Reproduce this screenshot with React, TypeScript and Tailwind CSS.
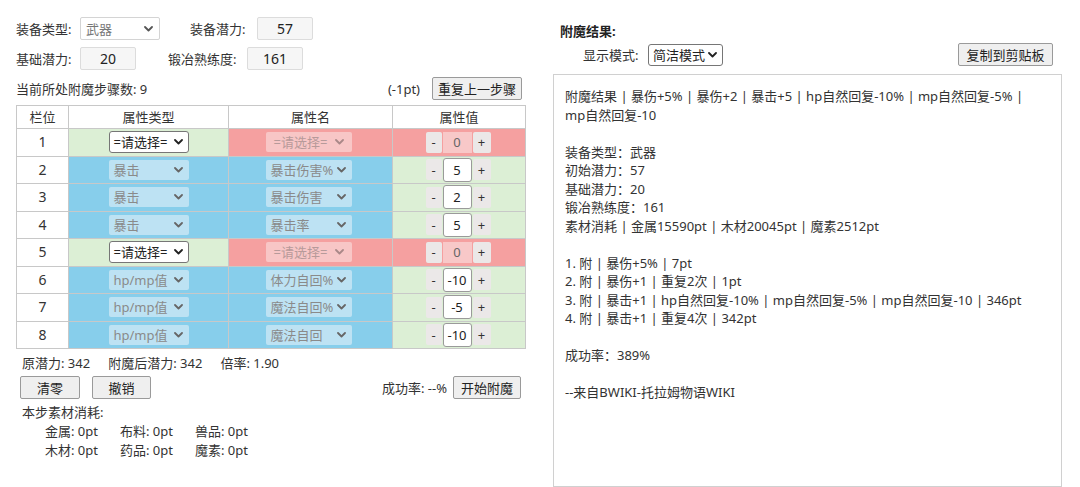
import React from "react";

const FONT = '"Noto Sans", "Noto Sans CJK SC", sans-serif';

function Chevron({ color = "#222" }: { color?: string }) {
  return (
    <svg width="9" height="6" viewBox="0 0 9 6" className="shrink-0">
      <path d="M1 1 L4.5 4.5 L8 1" fill="none" stroke={color} strokeWidth="1.8" strokeLinecap="round" strokeLinejoin="round" />
    </svg>
  );
}

type Variant = "white" | "blue" | "red" | "plain";

function Sel({ text, w, variant }: { text: string; w: string; variant: Variant }) {
  if (variant === "white") {
    return (
      <div className={`${w} h-[22px] flex items-center justify-between pl-[4px] pr-[5px] bg-white border border-[#767676] rounded-[3px] text-[#222]`}>
        <span>{text}</span>
        <Chevron color="#222" />
      </div>
    );
  }
  if (variant === "plain") {
    return (
      <div className={`${w} h-[23px] flex items-center justify-between pl-[5px] pr-[6px] bg-white border border-[#d4d4d4] rounded-[2px] text-[#777]`}>
        <span>{text}</span>
        <Chevron color="#555" />
      </div>
    );
  }
  if (variant === "blue") {
    return (
      <div className={`${w} h-[20px] flex items-center justify-between pl-[5px] pr-[6px] bg-[#bde2f3] rounded-[2px] text-[#8a8a8a]`}>
        <span>{text}</span>
        <Chevron color="#666" />
      </div>
    );
  }
  return (
    <div className={`${w} h-[20px] flex items-center justify-between pl-[8px] pr-[8px] bg-[#f8c6c6] rounded-[2px] text-[#b79a9a]`}>
      <span>{text}</span>
      <Chevron color="#a88" />
    </div>
  );
}

function Stepper({ v, disabled }: { v: string; disabled: boolean }) {
  return (
    <div className="flex items-center justify-center gap-[1px] pr-[2px]">
      <div className="w-[16px] h-[21px] flex items-center justify-center bg-[#ebe8e8] text-[#333] rounded-[2px]">-</div>
      {disabled ? (
        <div className="w-[29px] h-[21px] flex items-center justify-center bg-[#f8c8c8] text-[#666]">{v}</div>
      ) : (
        <div className="w-[29px] h-[24px] flex items-center justify-center bg-white border border-[#9a9a9a] rounded-[3px] text-[#222]">{v}</div>
      )}
      <div className="w-[18px] h-[21px] flex items-center justify-center bg-[#ebe8e8] text-[#333] rounded-[2px]">+</div>
    </div>
  );
}

type Row = { n: number; type: string; name: string; val: string; empty: boolean };

const rows: Row[] = [
  { n: 1, type: "=请选择=", name: "=请选择=", val: "0", empty: true },
  { n: 2, type: "暴击", name: "暴击伤害%", val: "5", empty: false },
  { n: 3, type: "暴击", name: "暴击伤害", val: "2", empty: false },
  { n: 4, type: "暴击", name: "暴击率", val: "5", empty: false },
  { n: 5, type: "=请选择=", name: "=请选择=", val: "0", empty: true },
  { n: 6, type: "hp/mp值", name: "体力自回%", val: "-10", empty: false },
  { n: 7, type: "hp/mp值", name: "魔法自回%", val: "-5", empty: false },
  { n: 8, type: "hp/mp值", name: "魔法自回", val: "-10", empty: false },
];

function Btn({ children, w }: { children: React.ReactNode; w: string }) {
  return (
    <div className={`${w} h-[23px] flex items-center justify-center bg-[#efefef] border border-[#9a9a9a] rounded-[2px] text-[#222]`}>
      {children}
    </div>
  );
}

function Box({ v, w }: { v: string; w: string }) {
  return (
    <div className={`${w} h-[23px] flex items-center justify-center bg-[#f6f6f6] border border-[#dcdcdc] rounded-[2px] text-[#222] text-[14px]`}>
      {v}
    </div>
  );
}

export default function App() {
  const green = "bg-[#dcefd5]";
  const red = "bg-[#f5a0a0]";
  const blue = "bg-[#87ceeb]";
  const td = "border border-[#c8c8c8] p-0 align-middle";
  return (
    <div className="w-[1080px] h-[487px] overflow-hidden bg-white text-[13px] text-[#333] leading-[18px] flex px-4 pt-[17px] gap-[28px]" style={{ fontFamily: FONT }}>
      {/* Left panel */}
      <div className="w-[509px] shrink-0 flex flex-col">
        <div className="flex items-center h-[23px]">
          <span className="w-[64px]">装备类型:</span>
          <Sel text="武器" w="w-[80px]" variant="plain" />
          <span className="ml-[30px] w-[67px]">装备潜力:</span>
          <Box v="57" w="w-[56px]" />
        </div>
        <div className="flex items-center h-[23px] mt-[7px]">
          <span className="w-[64px]">基础潜力:</span>
          <Box v="20" w="w-[56px]" />
          <span className="ml-[32px] w-[79px]">锻冶熟练度:</span>
          <Box v="161" w="w-[56px]" />
        </div>
        <div className="flex items-center justify-between h-[23px] mt-[7px] pr-[3px]">
          <span>当前所处附魔步骤数: 9</span>
          <div className="flex items-center gap-[12px]">
            <span>(-1pt)</span>
            <Btn w="w-[90px]">重复上一步骤</Btn>
          </div>
        </div>
        <table className="mt-[5px] w-[509px] border-collapse table-fixed text-center">
          <colgroup>
            <col className="w-[52px]" />
            <col className="w-[160px]" />
            <col className="w-[164px]" />
            <col className="w-[133px]" />
          </colgroup>
          <thead>
            <tr className="h-[23px] bg-white">
              <th className={`${td} font-normal`}>栏位</th>
              <th className={`${td} font-normal`}>属性类型</th>
              <th className={`${td} font-normal`}>属性名</th>
              <th className={`${td} font-normal`}>属性值</th>
            </tr>
          </thead>
          <tbody>
            {rows.map((r) => (
              <tr key={r.n} className="h-[27.5px]">
                <td className={`${td} bg-white text-[14px]`}>{r.n}</td>
                <td className={`${td} ${r.empty ? green : blue}`}>
                  <div className="flex justify-center">
                    <Sel text={r.type} w="w-[80px]" variant={r.empty ? "white" : "blue"} />
                  </div>
                </td>
                <td className={`${td} ${r.empty ? red : blue}`}>
                  <div className="flex justify-center pr-[4px]">
                    <Sel text={r.name} w="w-[86px]" variant={r.empty ? "red" : "blue"} />
                  </div>
                </td>
                <td className={`${td} ${r.empty ? red : green}`}>
                  <Stepper v={r.val} disabled={r.empty} />
                </td>
              </tr>
            ))}
          </tbody>
        </table>
        <div className="flex gap-[18px] mt-[5px] pl-[6px]">
          <span>原潜力: 342</span>
          <span>附魔后潜力: 342</span>
          <span>倍率: 1.90</span>
        </div>
        <div className="flex items-center justify-between mt-[4px] pl-[4px] pr-[4px]">
          <div className="flex gap-[12px]">
            <Btn w="w-[60px]">清零</Btn>
            <Btn w="w-[59px]">撤销</Btn>
          </div>
          <div className="flex items-center gap-[6px]">
            <span>成功率: --%</span>
            <Btn w="w-[68px]">开始附魔</Btn>
          </div>
        </div>
        <div className="mt-[4px] pl-[6px]">本步素材消耗:</div>
        <div className="grid grid-cols-[75px_75px_75px] pl-[29px] mt-[1px] leading-[19px]">
          <span>金属: 0pt</span>
          <span>布料: 0pt</span>
          <span>兽品: 0pt</span>
          <span>木材: 0pt</span>
          <span>药品: 0pt</span>
          <span>魔素: 0pt</span>
        </div>
      </div>

      {/* Right panel */}
      <div className="w-[509px] shrink-0 flex flex-col pt-[5px]">
        <div className="font-bold text-[#222] pl-[7px]">附魔结果:</div>
        <div className="flex items-center justify-between mt-[3px] pr-[9px]">
          <div className="flex items-center pl-[30px]">
            <span className="w-[65px]">显示模式:</span>
            <Sel text="简洁模式" w="w-[75px]" variant="white" />
          </div>
          <Btn w="w-[95px]">复制到剪贴板</Btn>
        </div>
        <div className="mt-[8px] h-[430px] border border-[#d0d0d0] px-[11px] pt-[12px] text-[#333] leading-[18.5px]">
          <div>附魔结果 | 暴伤+5% | 暴伤+2 | 暴击+5 | hp自然回复-10% | mp自然回复-5% |</div>
          <div>mp自然回复-10</div>
          <div className="h-[18.5px]" />
          <div>装备类型：武器</div>
          <div>初始潜力：57</div>
          <div>基础潜力：20</div>
          <div>锻冶熟练度：161</div>
          <div>素材消耗 | 金属15590pt | 木材20045pt | 魔素2512pt</div>
          <div className="h-[18.5px]" />
          <div>1. 附 | 暴伤+5% | 7pt</div>
          <div>2. 附 | 暴伤+1 | 重复2次 | 1pt</div>
          <div>3. 附 | 暴击+1 | hp自然回复-10% | mp自然回复-5% | mp自然回复-10 | 346pt</div>
          <div>4. 附 | 暴击+1 | 重复4次 | 342pt</div>
          <div className="h-[18.5px]" />
          <div>成功率：389%</div>
          <div className="h-[18.5px]" />
          <div>--来自BWIKI-托拉姆物语WIKI</div>
        </div>
      </div>
    </div>
  );
}
